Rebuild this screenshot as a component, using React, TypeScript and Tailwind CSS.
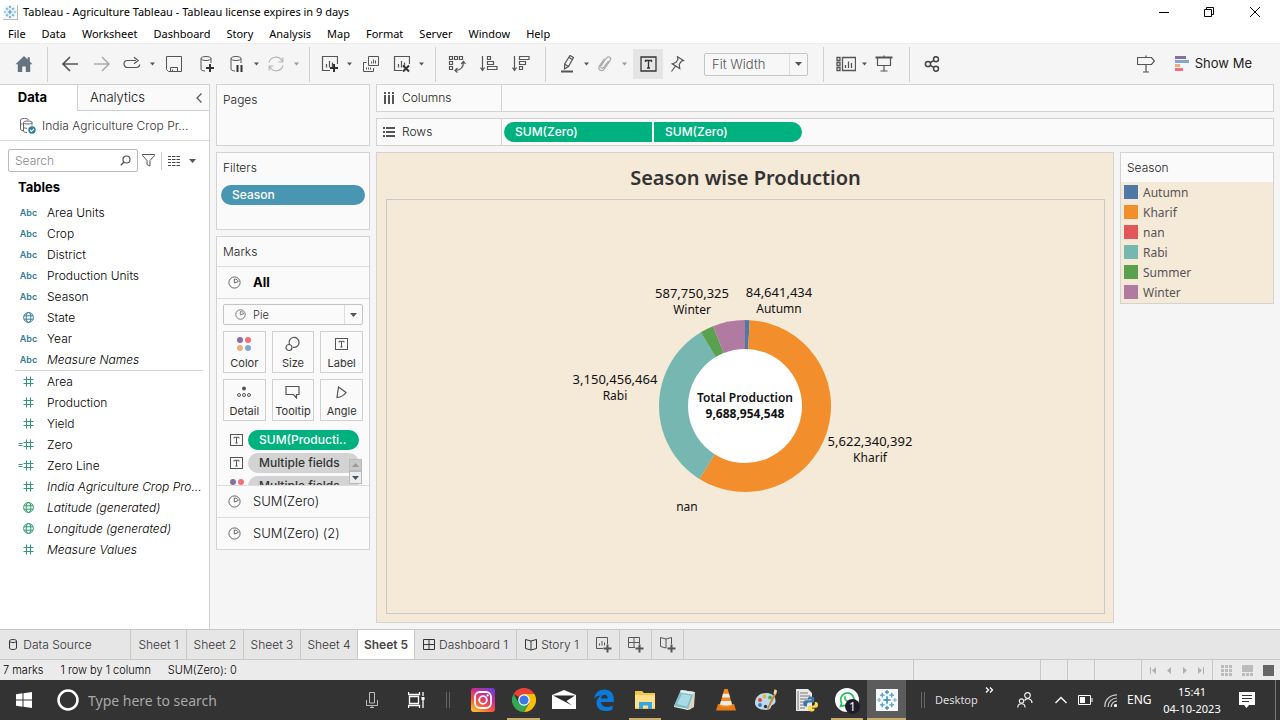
import React from "react";
import type { ReactNode } from "react";

/* ---------- shared drawing helpers ---------- */

type IconProps = { children: ReactNode; w?: number; h?: number; className?: string };

function Icon({ children, w = 18, h = 18, className = "" }: IconProps) {
  return (
    <svg width={w} height={h} viewBox={`0 0 ${w} ${h}`} fill="none" stroke="currentColor" aria-hidden="true" className={"shrink-0 " + className}>
      {children}
    </svg>
  );
}

function Caret({ className = "" }: { className?: string }) {
  return (
    <Icon w={5} h={4} className={className}>
      <path d="M0 0.5h5L2.5 3.5z" fill="currentColor" stroke="none" />
    </Icon>
  );
}

const Plus = ({ x, y }: { x: number; y: number }) => (
  <path d={`M${x - 4} ${y}h8M${x} ${y - 4}v8`} strokeWidth="2" className="stroke-[#333]" />
);

function ToolButton({ label, className = "w-8", children }: { label: string; className?: string; children: ReactNode }) {
  return (
    <button type="button" aria-label={label} className={"flex h-8 shrink-0 items-center justify-center " + className}>
      {children}
    </button>
  );
}

function PieGlyph({ size = 13 }: { size?: number }) {
  return (
    <svg width={size} height={size} viewBox="0 0 13 13" fill="none" stroke="#666" aria-hidden="true" className="shrink-0">
      <circle cx="6.5" cy="6.5" r="5.6" />
      <path d="M6.3 7V3c2.100 0 3.600 1 3.900 2.600L6.300 7z" />
    </svg>
  );
}

function TextGlyph({ w = 13, h = 12 }: { w?: number; h?: number }) {
  return (
    <svg width={w} height={h} viewBox="0 0 13 12" fill="none" stroke="#555" aria-hidden="true" className="shrink-0">
      <rect x="0.5" y="0.5" width="12" height="11" />
      <path d="M4 4.5v-1.2h5v1.2M6.5 3.3V9M5.3 9h2.4" />
    </svg>
  );
}

function GlobeGlyph() {
  return (
    <Icon w={11} h={11}>
      <circle cx="5.5" cy="5.5" r="4.9" />
      <ellipse cx="5.5" cy="5.5" rx="2.3" ry="4.9" />
      <path d="M1 3.8h9M1 7.2h9" />
    </Icon>
  );
}

function HashGlyph() {
  return (
    <Icon w={11} h={11}>
      <path d="M3.5 0.5v10M7.5 0.5v10M0.5 3.5h10M0.5 7.5h10" />
    </Icon>
  );
}

/* ---------- title bar and menu ---------- */

function TableauMark({ size = 16 }: { size?: number }) {
  return (
    <svg width={size} height={size} viewBox="0 0 24 24" fill="none" aria-hidden="true" className="shrink-0">
      <rect width="24" height="24" fill="#f7fafc" />
      <path d="M12 8v8M8 12h8" stroke="#2c8cc0" strokeWidth="1.6" />
      <path d="M12 1.2v4.4M9.8 3.4h4.4M12 18.4v4.4M9.8 20.6h4.4" stroke="#3a7fa8" strokeWidth="1.2" />
      <path d="M1.2 12h4.4M3.4 9.8v4.4M18.4 12h4.4M20.6 9.8v4.4" stroke="#6aaedb" strokeWidth="1.2" />
      <path d="M6.8 4.2v5M4.3 6.7h5M17.2 4.2v5M14.7 6.7h5M6.8 14.8v5M4.3 17.3h5M17.2 14.8v5M14.7 17.3h5" stroke="#4d9bc8" strokeWidth="1.3" />
    </svg>
  );
}

function TitleBar() {
  return (
    <header className="flex h-6 shrink-0 items-center bg-white pl-[3px] text-[11px] text-black">
      <span className="border-b border-r border-[#bbb]"><TableauMark size={14} /></span>
      <h1 className="ml-[5px]">Tableau - Agriculture Tableau - Tableau license expires in 9 days</h1>
      <div className="ml-auto flex items-center pr-px">
        <button type="button" aria-label="Minimize" className="flex h-6 w-[45px] items-center justify-center">
          <Icon w={10} h={10}><path d="M0 5.5h10" stroke="#000" /></Icon>
        </button>
        <button type="button" aria-label="Restore" className="flex h-6 w-[45px] items-center justify-center">
          <Icon w={10} h={10}><path d="M0.5 2.5h7v7h-7zM2.5 2.5v-2h7v7h-2" stroke="#000" /></Icon>
        </button>
        <button type="button" aria-label="Close" className="flex h-6 w-[48px] items-center justify-center">
          <Icon w={10} h={10}><path d="M0 0l10 10M10 0L0 10" stroke="#000" /></Icon>
        </button>
      </div>
    </header>
  );
}

const menus = ["File", "Data", "Worksheet", "Dashboard", "Story", "Analysis", "Map", "Format", "Server", "Window", "Help"];

function MenuBar() {
  return (
    <nav aria-label="Main menu" className="flex h-[19px] shrink-0 items-center gap-4 bg-white pl-2 pt-0.5 text-[11px] text-black">
      {menus.map((m) => (
        <button type="button" key={m}>{m}</button>
      ))}
    </nav>
  );
}

/* ---------- toolbar ---------- */

const group = "flex h-[35px] shrink-0 items-center border-r border-[#cfcfcf]";

function ChartFrame() {
  return <path d="M10 15.5H2.5v-14h15V9M6.5 12.5V9M9.5 12.5V6M12.5 12.5V7.5" strokeWidth="1.2" />;
}

function Cylinder() {
  return <path d="M4 3.5c0-1.1 2.2-2 5-2s5 .9 5 2-2.2 2-5 2-5-.9-5-2zV14c0 1.2 1.5 1.8 4 2M14 3.5V8" />;
}

function Toolbar() {
  return (
    <div role="toolbar" aria-label="Worksheet tools" className="flex h-[41px] shrink-0 items-center border-t border-[#ececec] bg-[#f5f5f5] font-['Inter','Liberation_Sans',sans-serif] font-light text-[#555]">
      <div className={group + " w-12 justify-center"}>
        <ToolButton label="Start page">
          <Icon><path d="M9 1L0.5 9.2h2.3V17h4.4v-5.4h3.6V17h4.4V9.2h2.3L14.8 6.5V2.2h-2.2v2.2z" fill="#65727f" stroke="none" /></Icon>
        </ToolButton>
      </div>
      <div className={group + " pl-1.5 pr-[7px]"}>
        <ToolButton label="Undo"><Icon><path d="M17 9H2M9 2L2 9l7 7" strokeWidth="1.7" /></Icon></ToolButton>
        <ToolButton label="Redo"><Icon className="text-[#aaa]"><path d="M1 9h15M9 2l7 7-7 7" strokeWidth="1.5" /></Icon></ToolButton>
        <ToolButton label="Replay" className="w-7"><Icon><path d="M13 5.5H4.5a3.5 3.5 0 0 0 0 7h9a3.3 3.3 0 0 0 3.2-3M11 2.2l4.2 3.3L11 8.8" strokeWidth="1.2" /></Icon></ToolButton>
        <ToolButton label="Replay options" className="w-3"><Caret /></ToolButton>
        <ToolButton label="Save"><Icon><path d="M1.5 1.5h15v15h-13l-2-2zM5.5 16.5v-4h7v4M7.5 16.5v-2" /></Icon></ToolButton>
        <ToolButton label="New data source"><Icon><Cylinder /><Plus x={13} y={13} /></Icon></ToolButton>
        <ToolButton label="Pause updates" className="w-7"><Icon><Cylinder /><path d="M10.5 10v7M14.5 10v7" strokeWidth="2" stroke="#333" /></Icon></ToolButton>
        <ToolButton label="Pause options" className="w-3"><Caret /></ToolButton>
        <ToolButton label="Refresh" className="w-7"><Icon className="text-[#b5b5b5]"><path d="M2 7.5a7 7 0 0 1 13-1.5M16 10.5a7 7 0 0 1-13 1.5M15.8 2.5V7h-4.3M2.2 15.5V11h4.3" strokeWidth="1.2" /></Icon></ToolButton>
        <ToolButton label="Refresh options" className="w-3"><Caret className="text-[#999]" /></ToolButton>
      </div>
      <div className={group + " pl-[5px] pr-2"}>
        <ToolButton label="New worksheet" className="w-7"><Icon><ChartFrame /><Plus x={14} y={13} /></Icon></ToolButton>
        <ToolButton label="New sheet options" className="w-3"><Caret /></ToolButton>
        <ToolButton label="Duplicate sheet"><Icon><path d="M6.5 1.5h10v9h-10zM4.5 7.5h-3v9h10v-3.5M9.5 8.5v-2M11.5 8.5v-4M13.5 8.5v-3M4.5 14.5v-2M6.5 14.5v-2M8.5 14.5v-2" /></Icon></ToolButton>
        <ToolButton label="Clear sheet" className="w-7"><Icon><ChartFrame /><path d="M11 10.5l6 6M17 10.5l-6 6" strokeWidth="2" stroke="#333" /></Icon></ToolButton>
        <ToolButton label="Clear options" className="w-3"><Caret /></ToolButton>
      </div>
      <div className={group + " pl-[5px] pr-2"}>
        <ToolButton label="Swap rows and columns"><Icon><path d="M1.5 1.5h3v3h-3zM6.5 1.5h3v3h-3zM11.5 1.5h3v3h-3zM1.5 6.5h3v3h-3zM1.5 11.5h3v3h-3zM15.5 7c0 5-2.5 8-8 8.5M13.2 9l2.3-2.5L17.5 9M9.500 13l-2.500 2.500L9.500 17.500" strokeWidth="1.2" /></Icon></ToolButton>
        <ToolButton label="Sort ascending"><Icon><path d="M2.5 1v14M0.5 12.5l2 3 2-3M7.5 1.5h3v3h-3zM7.5 6.5h6v3h-6zM7.5 11.5h9.5v3h-9.5z" strokeWidth="1.2" /></Icon></ToolButton>
        <ToolButton label="Sort descending"><Icon><path d="M2.5 1v14M0.5 12.5l2 3 2-3M7.5 1.5h9.5v3h-9.5zM7.5 6.5h6v3h-6zM7.5 11.5h3v3h-3z" strokeWidth="1.2" /></Icon></ToolButton>
      </div>
      <div className={group + " pl-2 pr-[15px]"}>
        <ToolButton label="Highlight" className="w-7"><Icon><path d="M11 0.500l3.500 2-5 9-4 2.500.2-5zM5.500 9l3.800 2.500M10 2.500l3.500 2" strokeWidth="1.200" /><path d="M2 16.500h12" strokeWidth="2" /></Icon></ToolButton>
        <ToolButton label="Highlight options" className="w-2"><Caret /></ToolButton>
        <ToolButton label="Group members" className="w-[30px]"><Icon className="text-[#aaa]"><path d="M12.5 6l-5 6.5c-1.500 1.700-3.500 0-2.500-1.700L10.500 3c2-2.500 5.300-.3 3.700 2.300L8 14.300c-2.300 3-6.800 0-4.500-3.500L8.500 3.500" strokeWidth="1.2" /></Icon></ToolButton>
        <ToolButton label="Group options" className="w-2"><Caret className="text-[#999]" /></ToolButton>
        <button type="button" aria-label="Show mark labels" aria-pressed="true" className="ml-[5px] flex size-[30px] items-center justify-center bg-[#e4e4e4] text-[#333]">
          <Icon w={17} h={16}><path d="M1 1h15v14H1zM5.5 6V4.500h6V6M8.5 4.500v7.500M7 12h3" strokeWidth="1.3" /></Icon>
        </button>
        <ToolButton label="Fix axes" className="w-7"><Icon w={16} h={16}><path d="M8.500 0.800l6 3.700-2 .6-2.300 3.400.6 4-7.600-4.700 3.700-1.200L9 3.200zM6.500 10L2.500 15.500" strokeWidth="1.200" /></Icon></ToolButton>
        <div className="relative ml-[13px]">
          <select aria-label="Fit" className="block h-[23px] w-[104px] appearance-none rounded-[2px] border border-[#c4c4c4] bg-[#f7f7f7] pl-[7px] text-[13px] leading-4 text-[#555]">
            <option>Fit Width</option>
          </select>
          <div className="pointer-events-none absolute inset-y-px right-px flex w-[18px] items-center justify-center border-l border-[#ddd]">
            <Icon w={7} h={4}><path d="M0 0h7L3.5 4z" fill="currentColor" stroke="none" /></Icon>
          </div>
        </div>
      </div>
      <div className={group + " pl-2 pr-[9px]"}>
        <ToolButton label="Show or hide cards" className="w-7"><Icon w={20} h={16}><path d="M1 1.5h3v3H1zM1 6.5h3v3H1zM1 11.5h3v3H1zM6.5 1.5h13v13h-13zM9.5 12V9M12.5 12V5.500M15.5 12V7" strokeWidth="1.3" /></Icon></ToolButton>
        <ToolButton label="Card options" className="w-2"><Caret /></ToolButton>
        <ToolButton label="Presentation mode"><Icon><path d="M2.5 3v7.500h13V3M9 10.500V16M5.500 16h7M9 0.500V2" strokeWidth="1.2" /><path d="M0.5 2.500h17" strokeWidth="2" /></Icon></ToolButton>
      </div>
      <div className="flex items-center pl-1.5">
        <ToolButton label="Share"><Icon w={16} h={16} className="text-[#444]"><circle cx="4" cy="8" r="2.6" strokeWidth="1.5" /><circle cx="12" cy="3.2" r="2.5" strokeWidth="1.5" /><circle cx="12" cy="12.8" r="2.5" strokeWidth="1.5" /><path d="M6.3 6.700L9.700 4.600M6.300 9.300l3.400 2.100" strokeWidth="1.5" /></Icon></ToolButton>
      </div>
      <div className="ml-auto flex items-center pr-7">
        <ToolButton label="Guide"><Icon w={18} h={20}><path d="M0.5 3.500h14l3 3.500-3 3.500h-14zM9 10.500V18M6 18h6M9 1.500v2" strokeWidth="1.2" /></Icon></ToolButton>
        <button type="button" className="ml-[13px] flex items-center gap-[6px] text-[13px] font-normal text-[#222]">
          <Icon w={14} h={16}>
            <g stroke="none">
              <path d="M0 0h11v3H0z" fill="#86709a" /><path d="M0 4h14v3H0z" fill="#82a6cd" />
              <path d="M0 8h5v3H0z" fill="#f5ab7a" /><path d="M0 12h8v3H0z" fill="#f86d7c" />
            </g>
          </Icon>
          Show Me
        </button>
      </div>
    </div>
  );
}

/* ---------- data pane ---------- */

type Field = { name: string; kind: "abc" | "geo" | "num" | "calc"; generated?: boolean };

const dimensions: Field[] = [
  { name: "Area Units", kind: "abc" },
  { name: "Crop", kind: "abc" },
  { name: "District", kind: "abc" },
  { name: "Production Units", kind: "abc" },
  { name: "Season", kind: "abc" },
  { name: "State", kind: "geo" },
  { name: "Year", kind: "abc" },
  { name: "Measure Names", kind: "abc", generated: true },
];

const measures: Field[] = [
  { name: "Area", kind: "num" },
  { name: "Production", kind: "num" },
  { name: "Yield", kind: "num" },
  { name: "Zero", kind: "calc" },
  { name: "Zero Line", kind: "calc" },
  { name: "India Agriculture Crop Pro...", kind: "num", generated: true },
  { name: "Latitude (generated)", kind: "geo", generated: true },
  { name: "Longitude (generated)", kind: "geo", generated: true },
  { name: "Measure Values", kind: "num", generated: true },
];

function FieldList({ fields, tint, label }: { fields: Field[]; tint: string; label: string }) {
  return (
    <ul aria-label={label} className="text-[12px] text-black">
      {fields.map((f) => (
        <li key={f.name} className="flex h-[21px] items-center">
          <span className={"flex w-[47px] shrink-0 items-center justify-center pl-[10px] text-[9px] font-semibold " + tint}>
            {f.kind === "abc" && "Abc"}
            {f.kind === "geo" && <GlobeGlyph />}
            {f.kind === "num" && <HashGlyph />}
            {f.kind === "calc" && (
              <Icon w={19} h={11} className="-translate-x-0.5">
                <path d="M9.5 0.5v10M13.5 0.5v10M6.5 3.5h10M6.5 7.5h10M1.5 4.500h4M1.5 6.500h4" />
              </Icon>
            )}
          </span>
          <span className={"truncate " + (f.generated ? "italic" : "")}>{f.name}</span>
        </li>
      ))}
    </ul>
  );
}

function DataPane() {
  return (
    <aside className="flex w-[210px] shrink-0 flex-col border-r border-t border-[#d0d0d0] bg-white">
      <div className="flex h-[26px] shrink-0 text-[13px]">
        <button type="button" className="w-[77px] pr-3 font-bold text-black">Data</button>
        <div className="flex grow items-center border-b border-l border-[#d0d0d0] bg-[#fafafa] pl-3 text-[#111]">
          <button type="button">Analytics</button>
          <button type="button" aria-label="Collapse pane" className="ml-auto mr-[7px]">
            <Icon w={6} h={10}><path d="M5.5 0.5L1 5l4.5 4.5" stroke="#555" strokeWidth="1.2" /></Icon>
          </button>
        </div>
      </div>
      <div className="flex h-[30px] shrink-0 items-center gap-[5px] border-b border-[#dcdcdc] pl-[19px] text-[12px] text-[#333]">
        <Icon w={18} h={18}>
          <path d="M1.5 3c0-1 1.800-1.500 4-1.500s4 .5 4 1.500M1.5 3v9c0 1 1 1.500 2.500 1.700M1.500 6c0 .6 1 1 2 1.200M4.500 5.500c0-1 1.800-1.500 4.500-1.500s4 .6 4 1.500-1.500 1.500-4 1.500-4.500-.5-4.500-1.500zv8.500c0 1 1.500 1.500 3.500 1.500M13 5.500v3M4.500 10c0 .8 1.500 1.300 3.500 1.300" stroke="#666" />
          <circle cx="13" cy="13" r="3.7" fill="#2f7f9f" stroke="none" />
          <path d="M11.200 13l1.300 1.300L15 11.800" stroke="#fff" strokeWidth="1.2" />
        </Icon>
        <span className="truncate">India Agriculture Crop Pr...</span>
      </div>
      <div className="flex shrink-0 items-center pl-2 pt-2">
        <div className="flex h-[23px] w-[130px] items-center rounded-[2px] border border-[#b9b9b9] pl-1.5 pr-1.5">
          <input type="text" aria-label="Search fields" placeholder="Search" className="w-full min-w-0 bg-transparent text-[12px] outline-none placeholder:text-[#888]" />
          <Icon w={11} h={11}><circle cx="6.5" cy="4.5" r="3.5" stroke="#555" strokeWidth="1.2" /><path d="M4 7L0.8 10.200" stroke="#555" strokeWidth="1.4" /></Icon>
        </div>
        <button type="button" aria-label="Filter fields" className="ml-[3px] flex w-[15px] justify-center">
          <Icon w={13} h={13}><path d="M0.5 0.500h12v1L8 6.500v5.500l-3-1.500v-4L0.500 1.500z" stroke="#555" /></Icon>
        </button>
        <span className="ml-[5px] h-[18px] w-px bg-[#ccc]" />
        <button type="button" aria-label="View options" className="ml-[6px] flex items-center gap-[9px]">
          <Icon w={12} h={10}><path d="M0 0.500h3M4 0.500h3.500M8.500 0.500h3.500M0 3.500h3M4 3.500h3.500M8.500 3.500h3.500M0 6.500h3M4 6.500h3.500M8.500 6.500h3.500M0 9.500h3M4 9.500h3.500M8.500 9.500h3.500" stroke="#444" /></Icon>
          <Icon w={7} h={4}><path d="M0 0h7L3.500 4z" fill="#555" stroke="none" /></Icon>
        </button>
      </div>
      <h2 className="flex h-[30px] shrink-0 items-center pl-[18px] pt-0.5 text-[13px] font-bold text-black">Tables</h2>
      <FieldList label="Dimensions" fields={dimensions} tint="text-[#377c99]" />
      <hr className="ml-[15px] mr-1.5 border-[#d6d6d6]" />
      <FieldList label="Measures" fields={measures} tint="text-[#2f9a70]" />
    </aside>
  );
}

/* ---------- cards ---------- */

const card = "shrink-0 border border-[#d3d3d3] bg-[#fafafa]";
const cardTitle = "flex h-[29px] items-center pl-1.5 text-[12px] text-[#222]";

function ColorDots() {
  return (
    <Icon w={16} h={16}>
      <g stroke="none">
        <circle cx="4" cy="4" r="3" fill="#86709a" /><circle cx="12" cy="4" r="3" fill="#f86d7c" />
        <circle cx="4" cy="12" r="3" fill="#f5ab7a" /><circle cx="12" cy="12" r="3" fill="#82a6cd" />
      </g>
    </Icon>
  );
}

const markButtons: { label: string; icon: ReactNode }[] = [
  { label: "Color", icon: <ColorDots /> },
  { label: "Size", icon: <Icon w={16} h={16}><path d="M4.500 8.500A5 5 0 1 1 8 11.300" strokeWidth="1.2" /><circle cx="4" cy="11.500" r="3" strokeWidth="1.2" /></Icon> },
  { label: "Label", icon: <TextGlyph /> },
  { label: "Detail", icon: <Icon w={14} h={12}><circle cx="7" cy="2.500" r="2" fill="#555" stroke="none" /><circle cx="2" cy="9" r="1.500" /><circle cx="7" cy="9" r="1.500" /><circle cx="12" cy="9" r="1.500" /></Icon> },
  { label: "Tooltip", icon: <Icon w={15} h={14}><path d="M1 1.500h13v8h-2.500v3.500l-3-3.500H1z" strokeWidth="1.2" /></Icon> },
  { label: "Angle", icon: <Icon w={13} h={13}><path d="M3.500 1l7.500 5.500c-2 3-5 4.500-9 5z" strokeWidth="1.2" /></Icon> },
];

function Pill({ children, className }: { children: ReactNode; className: string }) {
  return (
    <button type="button" className={"flex h-5 shrink-0 items-center rounded-full px-[11px] text-[12px] font-medium " + className}>
      {children}
    </button>
  );
}

function Cards() {
  return (
    <div className="flex w-[154px] shrink-0 flex-col gap-1.5">
      <section className={card + " h-[62px]"}><h2 className={cardTitle}>Pages</h2></section>
      <section className={card + " h-[78px]"}>
        <h2 className={cardTitle}>Filters</h2>
        <div className="px-1 pt-[3px]"><Pill className="w-full bg-[#4996b2] text-white">Season</Pill></div>
      </section>
      <section className={card + " text-[#555]"}>
        <h2 className={cardTitle}>Marks</h2>
        <button type="button" className="flex h-[33px] w-full items-center gap-3 border-y border-[#dcdcdc] pl-[11px] text-[13px] font-bold text-black"><PieGlyph />All</button>
        <div className="px-1.5 pt-[5px]">
          <div className="relative">
            <select aria-label="Mark type" className="block h-[21px] w-full appearance-none rounded-[2px] border border-[#c4c4c4] bg-[#fafafa] pl-[29px] text-[11px] leading-4 text-[#333]">
              <option>Pie</option>
            </select>
            <div className="pointer-events-none absolute inset-y-0 left-3 flex items-center"><PieGlyph size={11} /></div>
            <div className="pointer-events-none absolute inset-y-px right-px flex w-[18px] items-center justify-center border-l border-[#ddd]">
              <Icon w={7} h={4}><path d="M0 0h7L3.500 4z" fill="currentColor" stroke="none" /></Icon>
            </div>
          </div>
          <div className="mt-1.5 grid grid-cols-3 gap-x-1.5 gap-y-1.5">
            {markButtons.map((b) => (
              <button type="button" key={b.label} className="flex h-[42px] min-w-0 flex-col items-center justify-end border border-[#d0d0d0] text-[11px] font-normal text-[#333]">
                <span className="flex h-5 items-center justify-center text-[#555]">{b.icon}</span>
                <span className="leading-[18px]">{b.label}</span>
              </button>
            ))}
          </div>
        </div>
        <div className="relative mt-2 h-[56px] overflow-hidden pl-[13px] pt-px">
          <div className="flex flex-col gap-[3px]">
            <div className="flex items-center gap-[5px]"><TextGlyph /><Pill className="w-[111px] bg-[#00b180] text-white">SUM(Producti..</Pill></div>
            <div className="flex items-center gap-[5px]"><TextGlyph /><Pill className="w-[111px] bg-[#d3d3d3] text-[#333]">Multiple fields</Pill></div>
            <div className="flex items-center gap-[5px]"><span className="flex w-[13px] justify-center"><ColorDots /></span><Pill className="w-[111px] bg-[#d3d3d3] text-[#333]">Multiple fields</Pill></div>
          </div>
          <div className="absolute bottom-px right-[7px] flex flex-col">
            <button type="button" aria-label="Scroll up" className="flex h-3 w-[13px] items-center justify-center border border-[#bbb] bg-[#c9c9c9]"><Icon w={7} h={4}><path d="M0 4h7L3.500 0z" fill="#999" stroke="none" /></Icon></button>
            <button type="button" aria-label="Scroll down" className="flex h-[13px] w-[13px] items-center justify-center border border-[#bbb] bg-[#ededed]"><Icon w={7} h={4}><path d="M0 0h7L3.500 4z" fill="#44546a" stroke="none" /></Icon></button>
          </div>
        </div>
        <button type="button" className="flex h-8 w-full items-center gap-3 border-t border-[#dcdcdc] pl-[11px] text-[13px] text-[#111]"><PieGlyph />SUM(Zero)</button>
        <button type="button" className="flex h-8 w-full items-center gap-3 border-t border-[#dcdcdc] pl-[11px] text-[13px] text-[#111]"><PieGlyph />SUM(Zero) (2)</button>
      </section>
    </div>
  );
}

/* ---------- view ---------- */

function Shelf({ label, icon, children }: { label: string; icon: ReactNode; children?: ReactNode }) {
  return (
    <section className={card + " flex h-7 items-stretch"}>
      <h2 className="flex w-[125px] items-center gap-[7px] border-r border-[#d3d3d3] pl-1.5 text-[12px] text-[#222]">{icon}{label}</h2>
      <div className="flex items-center gap-0.5 pl-0.5">{children}</div>
    </section>
  );
}

const seasons = [
  { name: "Autumn", value: 84641434, color: "#4e79a7" },
  { name: "Kharif", value: 5622340392, color: "#f28e2b" },
  { name: "nan", value: 0, color: "#e15759" },
  { name: "Rabi", value: 3150456464, color: "#76b7b2" },
  { name: "Summer", value: 243765933, color: "#59a14f" },
  { name: "Winter", value: 587750325, color: "#b07aa1" },
];

const total = 9688954548;

function slices(cx: number, cy: number, r: number) {
  let start = 0;
  return seasons
    .map((s) => {
      const end = start + (s.value / total) * Math.PI * 2;
      const d = `M${cx} ${cy}L${cx + r * Math.sin(start)} ${cy - r * Math.cos(start)}A${r} ${r} 0 ${end - start > Math.PI ? 1 : 0} 1 ${cx + r * Math.sin(end)} ${cy - r * Math.cos(end)}z`;
      start = end;
      return { ...s, d };
    })
    .filter((s) => s.value > 0);
}

const chartLabels = [
  { x: 305, y: 98, value: "587,750,325", name: "Winter" },
  { x: 392, y: 97, value: "84,641,434", name: "Autumn" },
  { x: 228, y: 184, value: "3,150,456,464", name: "Rabi" },
  { x: 483, y: 246, value: "5,622,340,392", name: "Kharif" },
  { x: 300, y: 295, value: "", name: "nan" },
];

function DonutChart() {
  return (
    <svg viewBox="0 0 717 413" role="img" aria-label="Production by season" className="h-full w-full font-['Noto_Sans','Open_Sans',sans-serif] font-normal">
      {slices(358, 206, 86).map((s) => <path key={s.name} d={s.d} fill={s.color} />)}
      <circle cx="358" cy="206" r="57" fill="#fff" />
      <g textAnchor="middle" fill="#111">
        {chartLabels.map((l) => (
          <g key={l.name}>
            {l.value && <text x={l.x} y={l.y} fontSize="13">{l.value}</text>}
            <text x={l.x} y={l.y + 16} fontSize="12">{l.name}</text>
          </g>
        ))}
        <text x="358" y="202" fontSize="12" fontWeight="600">Total Production</text>
        <text x="358" y="218" fontSize="12" fontWeight="700">9,688,954,548</text>
      </g>
    </svg>
  );
}

function View() {
  return (
    <main className="flex min-w-0 grow flex-col gap-1.5 pb-1.5">
      <Shelf label="Columns" icon={<Icon w={12} h={12}><path d="M2 0v2M2 3v9M6 0v2M6 3v9M10 0v2M10 3v9" strokeWidth="2" stroke="#555" /></Icon>} />
      <Shelf label="Rows" icon={<Icon w={12} h={12}><path d="M0 2h2M3 2h9M0 6h2M3 6h9M0 10h2M3 10h9" strokeWidth="2" stroke="#555" /></Icon>}>
        <button type="button" className="flex h-5 w-[148px] items-center rounded-l-full bg-[#00b180] pl-[11px] text-[12px] font-medium text-white">SUM(Zero)</button>
        <button type="button" className="flex h-5 w-[148px] items-center rounded-r-full bg-[#00b180] pl-[11px] text-[12px] font-medium text-white">SUM(Zero)</button>
      </Shelf>
      <div className="flex min-h-0 grow gap-1.5">
        <section className="flex min-w-0 grow flex-col border border-[#d3d3d3] bg-[#f5e9d8] pb-2 pl-[9px] pr-2">
          <h2 className="flex h-[46px] shrink-0 items-center justify-center pt-1 font-['Noto_Sans','Open_Sans',sans-serif] text-[20px] font-semibold text-[#333]">Season wise Production</h2>
          <div className="min-h-0 grow border border-[#c9c9c9]"><DonutChart /></div>
        </section>
        <section className="w-[154px] shrink-0 self-start border border-[#d3d3d3] bg-[#fafafa]">
          <h2 className="flex h-[29px] items-center pl-1.5 text-[12px] text-[#222]">Season</h2>
          <ul className="bg-[#f5e9d8] pb-px font-['Noto_Sans','Open_Sans',sans-serif] text-[12px] font-normal text-[#555]">
            {seasons.map((s) => (
              <li key={s.name} className="flex h-5 items-center gap-[5px] pl-[3px]">
                <svg width="14" height="14" aria-hidden="true"><rect width="14" height="14" fill={s.color} /></svg>
                <span className="pt-0.5">{s.name}</span>
              </li>
            ))}
          </ul>
        </section>
      </div>
    </main>
  );
}

/* ---------- sheet tabs and status ---------- */

const tab = "flex h-full shrink-0 items-center justify-center border-r border-[#c8c8c8] ";

function GridGlyph() {
  return <path d="M0.5 0.500h11v10h-11zM6 0.500v10M0.5 5.500h11" />;
}

function BookGlyph() {
  return <path d="M6 2L0.5 0.500v9L6 11l5.500-1.500v-9L6 2v9" />;
}

function SheetTabs() {
  return (
    <nav aria-label="Sheets" className="flex h-[30px] shrink-0 border-t border-[#c8c8c8] bg-[#e6e6e6] text-[12px] text-[#333]">
      <button type="button" className={tab + "w-[131px] gap-1.5 pr-[29px]"}>
        <Icon w={8} h={11}><path d="M0.5 2c0-1 1.500-1.500 3.500-1.500s3.500.5 3.500 1.500S6 3.500 4 3.500.5 3 .5 2zv7c0 1 1.500 1.500 3.500 1.500s3.500-.5 3.500-1.500V2" /></Icon>
        Data Source
      </button>
      <button type="button" className={tab + "w-14"}>Sheet 1</button>
      <button type="button" className={tab + "w-[57px]"}>Sheet 2</button>
      <button type="button" className={tab + "w-[57px]"}>Sheet 3</button>
      <button type="button" className={tab + "w-[57px]"}>Sheet 4</button>
      <button type="button" aria-current="page" className={tab + "w-[57px] bg-white font-semibold text-[#444]"}>Sheet 5</button>
      <button type="button" className={tab + "w-[102px] gap-1"}><Icon w={12} h={11}><GridGlyph /></Icon>Dashboard 1</button>
      <button type="button" className={tab + "w-[71px] gap-1"}><Icon w={12} h={12}><BookGlyph /></Icon>Story 1</button>
      <button type="button" aria-label="New worksheet tab" className={tab + "w-8 text-[#555]"}>
        <Icon w={16} h={16}><path d="M7 11.500H0.500v-11h11V7M3.500 8.500v-2M6 8.500V4M8.500 8.500v-3" /><path d="M7.500 11.500h8M11.500 7.500v8" strokeWidth="2" /></Icon>
      </button>
      <button type="button" aria-label="New dashboard tab" className={tab + "w-8 text-[#555]"}>
        <Icon w={16} h={16}><path d="M7 10.500H0.500v-10h11V7M6 0.500v10M0.500 5.500h11" /><path d="M7.500 11.500h8M11.500 7.500v8" strokeWidth="2" /></Icon>
      </button>
      <button type="button" aria-label="New story tab" className={tab + "w-8 text-[#555]"}>
        <Icon w={16} h={16}><path d="M6 2L0.500 0.500v9L6 11V2l5.500-1.500V7" /><path d="M7.500 11.500h8M11.500 7.500v8" strokeWidth="2" /></Icon>
      </button>
    </nav>
  );
}

const cell = "h-full shrink-0 border-l border-[#c8c8c8] ";

function StatusBar() {
  return (
    <footer className="flex h-[21px] shrink-0 items-center border-t border-[#c8c8c8] bg-[#ebebeb] pl-[3px] text-[11px] text-black">
      <div className="flex gap-[17px]"><span>7 marks</span><span>1 row by 1 column</span><span>SUM(Zero): 0</span></div>
      <div className="ml-auto flex h-full">
        <span className={cell + "w-[127px]"} />
        <span className={cell + "w-[27px]"} />
        <span className={cell + "w-[27px]"} />
        <span className={cell + "w-[47px]"} />
        <div className={cell + "flex w-[71px] items-center justify-between px-2 text-[#b0b0b0]"}>
          <button type="button" aria-label="First"><Icon w={6} h={7}><path d="M0.5 0v7" /><path d="M6 0v7L2 3.500z" fill="currentColor" stroke="none" /></Icon></button>
          <button type="button" aria-label="Previous"><Icon w={4} h={7}><path d="M4 0v7L0 3.500z" fill="currentColor" stroke="none" /></Icon></button>
          <button type="button" aria-label="Next"><Icon w={4} h={7}><path d="M0 0v7l4-3.500z" fill="currentColor" stroke="none" /></Icon></button>
          <button type="button" aria-label="Last"><Icon w={6} h={7}><path d="M5.5 0v7" /><path d="M0 0v7l4-3.500z" fill="currentColor" stroke="none" /></Icon></button>
        </div>
        <div className={cell + "flex w-[68px] items-center justify-between pl-2 pr-[6px] text-[#bbb]"}>
          <button type="button" aria-label="Sheet sorter"><Icon w={11} h={11}><path d="M0 1.500h3m1 0h3m1 0h3M0 5.500h3m1 0h3m1 0h3M0 9.500h3m1 0h3m1 0h3" strokeWidth="3" /></Icon></button>
          <button type="button" aria-label="Filmstrip"><Icon w={11} h={11}><path d="M0 0h11v7H0z" fill="currentColor" stroke="none" /><path d="M0 9.500h3m1 0h3m1 0h3" strokeWidth="3" /></Icon></button>
          <button type="button" aria-label="Tabs view"><Icon w={11} h={11}><path d="M0 0h11v11H0z" fill="#666" stroke="none" /></Icon></button>
        </div>
      </div>
    </footer>
  );
}

/* ---------- desktop taskbar ---------- */

function AppSvg({ children }: { children: ReactNode }) {
  return <svg width="24" height="24" viewBox="0 0 24 24" aria-hidden="true">{children}</svg>;
}

const apps: { name: string; running?: boolean; icon: ReactNode }[] = [
  {
    name: "Instagram",
    icon: (
      <AppSvg>
        <defs>
          <linearGradient id="insta" x1="0.1" y1="1" x2="0.7" y2="0">
            <stop offset="0" stopColor="#fdc830" /><stop offset="0.35" stopColor="#f5603a" /><stop offset="0.65" stopColor="#d62e85" /><stop offset="1" stopColor="#7a3bd0" />
          </linearGradient>
        </defs>
        <rect width="24" height="24" rx="3" fill="url(#insta)" />
        <g fill="none" stroke="#fff" strokeWidth="1.8"><rect x="4" y="4" width="16" height="16" rx="5" /><circle cx="12" cy="12" r="3.8" /></g>
        <circle cx="16.600" cy="7.400" r="1.1" fill="#fff" />
      </AppSvg>
    ),
  },
  {
    name: "Chrome",
    running: true,
    icon: (
      <AppSvg>
        <path d="M12 12L1.600 6A12 12 0 0 1 22.400 6z" fill="#ea4335" />
        <path d="M12 6h10.400A12 12 0 0 1 12 24l5.200-9z" fill="#fbbc05" />
        <path d="M6.800 15L1.600 6A12 12 0 0 0 12 24l5.200-9z" fill="#34a853" />
        <circle cx="12" cy="12" r="5.800" fill="#fff" /><circle cx="12" cy="12" r="4.600" fill="#3b78e7" />
      </AppSvg>
    ),
  },
  {
    name: "Mail",
    icon: (
      <AppSvg>
        <path d="M0 7l12-5 12 5v14H0z" fill="#fff" /><path d="M1 7.500h22l-8.500 5.500 5.500 4.500L1 7.500z" fill="#2b2b2b" />
      </AppSvg>
    ),
  },
  {
    name: "Edge",
    icon: (
      <AppSvg>
        <path d="M2 11C3 4.500 7.500 1.500 12.500 1.500 18 1.500 21.800 5.500 21.800 11v3H9c.2 3.500 3 5 6 5 2.300 0 4-.6 5.500-1.500v4c-2 1-4.200 1.500-6.700 1.500C8 23 4.500 19.500 4.500 15c0-3.500 2-6 4.500-7.500C5.500 7.500 3.500 9 2 11zM9 10.500h6.800c0-2.200-1.200-3.700-3.200-3.700S9.300 8.200 9 10.500z" fill="#0a7bdc" />
      </AppSvg>
    ),
  },
  {
    name: "File Explorer",
    running: true,
    icon: (
      <AppSvg>
        <path d="M2 3h7l2 2h11v16H2z" fill="#f3c64b" /><path d="M2 7h20v13H2z" fill="#ffe08a" /><path d="M6 14h13v7h-4v-3.500h-5V21H6z" fill="#35a8df" />
      </AppSvg>
    ),
  },
  {
    name: "Notepad",
    icon: (
      <AppSvg>
        <path d="M8 2l14 2-1 15-5 3L1 18z" fill="#dcd6bf" /><path d="M8 2l13 2-6 17L1 18z" fill="#7fbccd" /><path d="M8 2l13 2-1 2.500L7.200 4.500z" fill="#e6ecee" /><path d="M9 6l9 1.500-4 11L4 16z" fill="#a9dbe6" /><path d="M1 18l14 3v1L1 19z" fill="#f2f2f2" />
      </AppSvg>
    ),
  },
  {
    name: "VLC",
    icon: (
      <AppSvg>
        <path d="M4 16h16l2 6.500H2z" fill="#e67a12" /><path d="M10.300 1h3.400l4.800 17c-2 1.800-11 1.800-13 0z" fill="#f58a1f" /><path d="M9 5.800h6l1 3.700H8zM7 13h10l1 3.500c-3 1.300-9 1.300-12 0z" fill="#ececec" />
      </AppSvg>
    ),
  },
  {
    name: "Paint",
    icon: (
      <AppSvg>
        <path d="M1 15C1 8.500 7 4.500 13 5c5.500.4 9 4 8.500 8.500-.5 3.500-4 3-4.500 5.500-.4 2.300-3 3.200-7 2.800C5 21.400 1 19 1 15z" fill="#bcd9ec" />
        <circle cx="6" cy="12" r="1.9" fill="#d9453b" /><circle cx="10.500" cy="8.500" r="1.9" fill="#f0b42a" /><circle cx="16" cy="9.500" r="1.9" fill="#4fae49" /><circle cx="6" cy="17" r="1.9" fill="#3c76c9" /><circle cx="11.500" cy="18.500" r="1.7" fill="#333" />
        <path d="M21 1l2 1.500-1 4L14.500 21l-1.500.5.300-2L20 5.500z" fill="#c98440" /><path d="M20.500 1.500l2.500 1-1 4-2.500-1z" fill="#edd9b1" />
      </AppSvg>
    ),
  },
  {
    name: "Python IDLE",
    icon: (
      <AppSvg>
        <path d="M2 1h12l4 4v18H2z" fill="#e9e9e9" /><path d="M4 3v19M6 5h8M6 8h10M6 11h9M6 14h6M6 17h5M6 20h5" stroke="#777" fill="none" />
        <path d="M17 8.500c-3 0-3 1-3 3h3.500v.8H12c-2 0-2.700 1.500-2.700 3.200s.7 3 2.400 3H13v-2c0-1.300 1-2 2-2h3.500c1.200 0 1.800-.8 1.800-1.800v-2.200c0-1.300-1.300-2-3.300-2z" fill="#3d76aa" />
        <path d="M17.500 23.500c3 0 3-1.200 3-3H17v-.8h5c1.500 0 2-1.500 2-3s-.7-2.700-2-2.700h-1.200v1.800c0 1.300-1 2-2 2H15.500c-1.200 0-1.700.8-1.700 1.800v2c0 1.200 1.700 1.900 3.700 1.900z" fill="#fdd84b" />
      </AppSvg>
    ),
  },
  {
    name: "WhatsApp",
    running: true,
    icon: (
      <AppSvg>
        <circle cx="12" cy="12" r="12" fill="#fff" />
        <path d="M5.500 18.500l1-3.500A6.700 6.700 0 1 1 9 17.500z" fill="none" stroke="#25c15a" strokeWidth="1.7" /><path d="M9.200 8.500c.8-1 1.300-.3 1.700.8-.8 1 .9 2.900 2.100 3.300.9-1.400 1.800-.5 2.500.2-.4 1.700-2 1.900-3.700 1-2-1-3-2.700-2.600-5.300z" fill="#25c15a" />
      </AppSvg>
    ),
  },
];

function Grip() {
  return <Icon w={4} h={16} className="text-[#666]"><path d="M0.5 0v16M3.5 0v16" /></Icon>;
}

function Taskbar() {
  return (
    <div className="flex h-10 shrink-0 items-center bg-[#333] text-white">
      <button type="button" aria-label="Start" className="flex h-full w-12 items-center justify-center">
        <Icon w={16} h={16}><path d="M0 2.200L6.500 1.300v6.200H0zM7.500 1.200L16 0v7.500H7.500zM0 8.500h6.500v6.200L0 13.800zM7.500 8.500H16V16l-8.500-1.200z" fill="#fff" stroke="none" /></Icon>
      </button>
      <div className="flex w-[344px] items-center pl-2">
        <Icon w={22} h={22} className="ml-px mr-[9px]"><circle cx="11" cy="11" r="9.500" stroke="#fff" strokeWidth="2.500" /></Icon>
        <input type="text" aria-label="Type here to search" placeholder="Type here to search" className="min-w-0 grow bg-transparent text-[14px] outline-none placeholder:text-[#a8a8a8]" />
        <button type="button" aria-label="Voice search" className="mr-[14px]">
          <Icon w={12} h={16}><path d="M3.500 0.500h5v10.500h-5zM0.500 8v5.500h11V8M6 13.500V16M4 15.500h4" stroke="#bbb" /></Icon>
        </button>
      </div>
      <button type="button" aria-label="Task view" className="flex w-12 items-center justify-center">
        <Icon w={17} h={16}><path d="M0.500 0v2.500h11V0M0.500 16v-2.500h11V16M1.500 4.500h9v7h-9zM15 0v4M15 8v8" stroke="#fff" strokeWidth="1.3" /><path d="M13.500 5h3v3h-3z" fill="#fff" stroke="none" /></Icon>
      </button>
      <div className="flex w-[23px] items-center pl-1.5"><Grip /></div>
      <div className="grid h-full w-[404px] grid-cols-10">
        {apps.map((a) => (
          <button type="button" key={a.name} aria-label={a.name} className="relative flex h-full items-center justify-center">
            {a.icon}
            {a.running && <span className="absolute inset-x-1 bottom-0 h-0.5 bg-[#c9ad6d]" />}
            {a.name === "WhatsApp" && (
              <span className="absolute bottom-[6px] right-[7px] flex size-[15px] items-center justify-center rounded-full bg-[#1d1d2b] text-[12px] leading-none">1</span>
            )}
          </button>
        ))}
      </div>
      <button type="button" aria-label="Tableau" className="flex h-full w-[39px] items-center justify-center border-b-2 border-[#c9ad6d] bg-[#5c5c5c] pt-0.5"><TableauMark size={22} /></button>
      <div className="ml-auto flex h-full items-center text-[12px]">
        <Grip />
        <span className="ml-[10px] w-[50px] text-[11px] text-[#ddd]">Desktop</span>
        <button type="button" aria-label="More toolbars" className="mb-5"><Icon w={9} h={6}><path d="M1 0.500L3.500 3 1 5.500M5 0.500L7.500 3 5 5.500" stroke="#fff" strokeWidth="1.3" /></Icon></button>
        <button type="button" aria-label="People" className="ml-[23px]">
          <Icon w={16} h={16}><circle cx="10.500" cy="3.500" r="2.800" stroke="#eee" strokeWidth="1.2" /><circle cx="4.500" cy="9" r="2.200" stroke="#eee" strokeWidth="1.2" /><path d="M0.800 15.500c0-5 7.200-5 7.200 0M7.500 8.500c3-3.500 7.500-1.500 7.500 2.500" stroke="#eee" strokeWidth="1.2" /></Icon>
        </button>
        <button type="button" aria-label="Show hidden icons" className="ml-[22px]"><Icon w={12} h={8}><path d="M0.500 7L6 1.500 11.500 7" stroke="#fff" strokeWidth="1.3" /></Icon></button>
        <Icon w={15} h={10} className="ml-[11px]"><path d="M0.500 0.500h12v9h-12zM14 3v4" stroke="#fff" /><path d="M2 2h5v6H2z" fill="#fff" stroke="none" /></Icon>
        <Icon w={13} h={13} className="ml-[11px]"><path d="M0.800 13C0.500 6 6 0.800 13 0.800M4 13c0-5 4-9 9-9M7.200 13c0-3.300 2.500-5.800 5.800-5.800" stroke="#ccc" strokeWidth="1.2" /><circle cx="11.500" cy="11.500" r="1.6" fill="#fff" stroke="none" /></Icon>
        <span className="ml-[10px] w-[35px] text-[12px]">ENG</span>
        <time className="flex w-[60px] flex-col items-center text-[11px] leading-[17px]"><span>15:41</span><span>04-10-2023</span></time>
        <button type="button" aria-label="Notifications" className="ml-[17px]">
          <Icon w={16} h={16}><path d="M0 0h16v13h-6l-2.500 3L5 13H0z" fill="#fff" stroke="none" /><path d="M3 3.500h10M3 6.500h10M3 9.500h7" stroke="#333" /></Icon>
        </button>
        <span className="ml-[20px] mr-1 h-full w-px bg-[#777]" />
      </div>
    </div>
  );
}

export default function App() {
  return (
    <div className="flex h-screen flex-col overflow-hidden bg-[#f5f5f5] font-['Noto_Sans','Open_Sans',sans-serif]">
      <TitleBar />
      <MenuBar />
      <Toolbar />
      <div className="flex min-h-0 grow gap-1.5 pr-1.5 font-['Inter','Liberation_Sans',sans-serif] font-light">
        <DataPane />
        <Cards />
        <View />
      </div>
      <div className="shrink-0 font-['Inter','Liberation_Sans',sans-serif] font-light">
        <SheetTabs />
        <StatusBar />
      </div>
      <Taskbar />
    </div>
  );
}
